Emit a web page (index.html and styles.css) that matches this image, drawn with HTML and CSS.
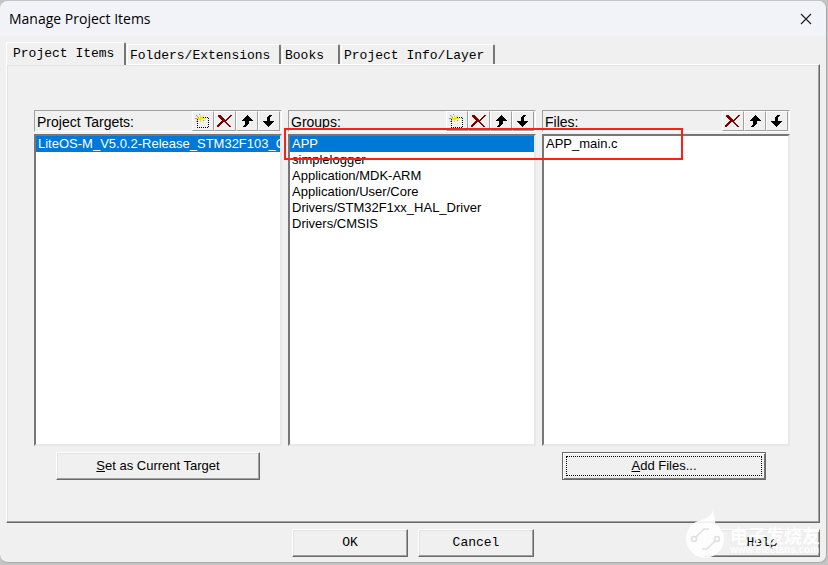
FILE: index.html
```html
<!DOCTYPE html>
<html lang="en">
<head>
<meta charset="utf-8">
<title>Manage Project Items</title>
<link rel="stylesheet" href="styles.css">
</head>
<body>
<svg class="defs" aria-hidden="true">
  <symbol id="new" viewBox="0 0 16 16" shape-rendering="crispEdges">
    <path d="M2.500 6V14.500H13.500V4.500H8" fill="none" stroke="#000" stroke-dasharray="1 1"/>
    <path d="M5 2h1v2h-1zM8 2h1v1h-1zM7 3h1v1h-1zM5 4h3v1h2v1h-3v1h-1v2h-1v-2h-1v-1h-2v-1h3z" fill="#f0e800"/>
    <path d="M1 2h1v1h-1zM2 3h1v1h-1zM3 4h1v1h-1zM0 5h2v1h-2zM2 7h1v1h-1zM1 8h1v1h-1zM8 7h1v1h-1zM4 1h1v1h-1z" fill="#929292"/>
  </symbol>
  <symbol id="delete" viewBox="0 0 16 16" shape-rendering="crispEdges">
    <path d="M1 2h3v1h1v1h1v1h1v1h1v1h1v-1h1v-1h1v-1h1v-1h1v-1h2v1h-1v1h-1v1h-1v1h-1v1h-1v1h-1v1h1v1h1v1h1v1h1v1h1v1h-2v-1h-1v-1h-1v-1h-1v-1h-1v-1h-2v1h-1v1h-1v1h-1v1h-1v1h-2v-2h1v-1h1v-1h1v-1h1v-1h1v-1h-1v-1h-1v-1h-1v-1h-1v-1h-1z" fill="#800000"/>
  </symbol>
  <symbol id="up" viewBox="0 0 16 16" shape-rendering="crispEdges">
    <path d="M8 2h1v1h1v1h1v1h1v1h1v1h1v1h-4v3h-1v1h-1v1h-1v1h-3v-1h1v-1h1v-4h-3v-1h1v-1h1v-1h1v-1h1v-1h1z" fill="#000"/>
  </symbol>
  <symbol id="down" viewBox="0 0 16 16" shape-rendering="crispEdges">
    <path d="M8 2h3v1h-1v1h-1v4h4v1h-1v1h-1v1h-1v1h-1v1h-1v1h-1v-1h-1v-1h-1v-1h-1v-1h-1v-1h-1v-1h4v-4h1v-1h1z" fill="#000"/>
  </symbol>
</svg>
<main class="dialog">
  <header class="titlebar">
    <h1>Manage Project Items</h1>
    <button class="close" aria-label="Close"><svg viewBox="0 0 12 12"><path d="M1 1l10 10M11 1L1 11" fill="none" stroke="#222" stroke-width="1.200"/></svg></button>
  </header>
  <div class="content">
    <nav class="tabs" role="tablist">
      <button class="tab active" role="tab" aria-selected="true">Project Items</button>
      <button class="tab" role="tab">Folders/Extensions</button>
      <button class="tab books" role="tab">Books</button>
      <button class="tab" role="tab">Project Info/Layer</button>
    </nav>
    <section class="panel">
      <div class="columns">
        <div class="column">
          <div class="bar">
            <label for="targets">Project Targets:</label>
            <button class="tool" aria-label="New target"><svg><use href="#new"/></svg></button>
            <button class="tool" aria-label="Delete target"><svg><use href="#delete"/></svg></button>
            <button class="tool" aria-label="Move target up"><svg><use href="#up"/></svg></button>
            <button class="tool" aria-label="Move target down"><svg><use href="#down"/></svg></button>
          </div>
          <select id="targets" size="19"><option selected>LiteOS-M_V5.0.2-Release_STM32F103_C8</option></select>
          <button class="button"><u>S</u>et as Current Target</button>
        </div>
        <div class="column">
          <div class="bar">
            <label for="groups">Groups:</label>
            <button class="tool" aria-label="New group"><svg><use href="#new"/></svg></button>
            <button class="tool" aria-label="Delete group"><svg><use href="#delete"/></svg></button>
            <button class="tool" aria-label="Move group up"><svg><use href="#up"/></svg></button>
            <button class="tool" aria-label="Move group down"><svg><use href="#down"/></svg></button>
          </div>
          <select id="groups" size="19">
            <option selected>APP</option>
            <option>simplelogger</option>
            <option>Application/MDK-ARM</option>
            <option>Application/User/Core</option>
            <option>Drivers/STM32F1xx_HAL_Driver</option>
            <option>Drivers/CMSIS</option>
          </select>
          <div class="marker"></div>
        </div>
        <div class="column">
          <div class="bar">
            <label for="files">Files:</label>
            <button class="tool" aria-label="Delete file"><svg><use href="#delete"/></svg></button>
            <button class="tool" aria-label="Move file up"><svg><use href="#up"/></svg></button>
            <button class="tool" aria-label="Move file down"><svg><use href="#down"/></svg></button>
          </div>
          <select id="files" size="19"><option>APP_main.c</option></select>
          <button class="button default"><u>A</u>dd Files...</button>
        </div>
      </div>
    </section>
    <footer class="footer">
      <button class="button ok">OK</button>
      <button class="button cancel">Cancel</button>
      <button class="button help">Help</button>
    </footer>
  </div>
  <div class="watermark">
    <svg viewBox="0 0 40 50"><path d="M28 1C29 8 31 10 30 15C36 18 39 24 39 30A19 19 0 1 1 13 12C20 10 26 8 28 1Z" fill="#fff"/><g fill="none" stroke="#dedede" stroke-width="1.500"><circle cx="9" cy="30" r="2.500"/><circle cx="32" cy="30" r="2.500"/><path d="M11 28L19 20H24M30 32L22 40H17"/></g></svg>
    <div class="brand"><span lang="zh">电子发烧友</span><small>www.elecfans.com</small></div>
  </div>
</main>
</body>
</html>
```
FILE: styles.css
```css
* { box-sizing: border-box; }
body {
  margin: 0;
  height: 100vh;
  padding: 1px 1px 2px 0;
  background: #c4c4c4;
  color: #000;
  font: 14px/16px "Liberation Sans", Arial, sans-serif;
}
button, select { font: inherit; color: inherit; border-radius: 0; }
button { padding: 0; background: #f0f0f0; }
.defs { position: absolute; width: 0; height: 0; }
.dialog {
  position: relative;
  height: 100%;
  display: flex;
  flex-direction: column;
  background: #f0f0f0;
  border: 1px solid #aaa;
  border-left: 0;
  border-top: 0;
  border-radius: 8px;
  overflow: hidden;
}
.titlebar {
  display: flex;
  align-items: center;
  justify-content: space-between;
  height: 36px;
  padding: 0 14px 0 9px;
  background: #f2f2f9;
}
h1 { margin: 0; font: 14px/20px "Open Sans", "Noto Sans", sans-serif; }
.close { width: 12px; height: 12px; border: 0; background: none; }
.close svg { display: block; width: 12px; height: 12px; }
.content {
  flex: 1;
  display: flex;
  flex-direction: column;
  padding: 6px 6px 5px;
}
.tabs {
  display: flex;
  align-items: flex-end;
  position: relative;
  margin-bottom: -1px;
}
.tab, .footer .button { font: 13px/16px "Liberation Mono", "Courier New", monospace; }
.tab {
  height: 20px;
  padding: 3px 4px 0 2px;
  margin: 0 0 1px 1px;
  border: 1px solid #fff;
  border-right: 2px solid #777;
  border-bottom: 0;
  border-radius: 2px 2px 0 0;
  flex: 0 0 154px;
  text-align: left;
}
.tab.active { flex-basis: 120px; height: 23px; margin: 0; padding: 0 6px 0; }
.tab.books { flex-basis: 58px; }
.panel {
  flex: 1;
  display: flex;
  padding: 45px 29px 42px 27px;
  border: 1px solid;
  border-color: #fff #696969 #696969 #fff;
  box-shadow: inset -1px -1px #a0a0a0, inset 1px 1px #e3e3e3;
}
.columns {
  flex: 1;
  display: grid;
  grid-template-columns: repeat(3, minmax(0, 1fr));
  gap: 6px;
}
.column { position: relative; display: flex; flex-direction: column; }
.bar {
  display: flex;
  height: 22px;
  padding-right: 1px;
  border: 1px solid;
  border-color: #a0a0a0 #fff #fff #a0a0a0;
}
.bar label { flex: 1; padding: 3px 0 0 2px; }
.tool {
  width: 22px;
  height: 20px;
  border: 1px solid;
  border-color: #fff #a0a0a0 #a0a0a0 #fff;
}
.tool svg { display: block; width: 16px; height: 16px; margin: auto; }
select {
  width: 100%;
  height: 312px;
  margin-top: 2px;
  padding: 0;
  border: 2px solid;
  border-color: #777 #e8e8e8 #e8e8e8 #777;
  background: #fff;
  outline: 0;
  overflow: hidden;
  scrollbar-width: none;
  font-size: 13px;
}
option { min-height: 16px; padding: 0 2px; line-height: 16px; color: #000; }
option:checked { background: #0078d7 linear-gradient(#0078d7, #0078d7); color: #fff !important; }
.button {
  height: 28px;
  border: 1px solid;
  border-color: #fff #696969 #696969 #fff;
  box-shadow: inset -1px -1px #a0a0a0, inset 1px 1px #e3e3e3;
}
.column .button { width: 204px; margin: 6px 0 0 22px; font-size: 13px; }
.column .button.default {
  margin-left: 20px;
  border: 1px solid #696969;
  box-shadow: inset 1px 1px #fff, inset -1px -1px #777;
  outline: 1px dotted #000;
  outline-offset: -5px;
}
.marker {
  position: absolute;
  top: 18px;
  left: -4px;
  width: 161%;
  height: 32px;
  border: 2px solid #fb2116;
  pointer-events: none;
  z-index: 1;
}
.footer {
  display: grid;
  grid-template-columns: 1fr 116px 116px 1fr;
  gap: 10px;
  margin-top: 6px;
}
.footer .button { grid-row: 1; }
.footer .ok { grid-column: 2; }
.footer .cancel { grid-column: 3; }
.footer .help { grid-column: 4; width: 116px; justify-self: end; }
.watermark {
  position: absolute;
  right: 6px;
  bottom: 3px;
  display: flex;
  align-items: flex-end;
  gap: 5px;
  color: #fff;
  opacity: .9;
  pointer-events: none;
}
.watermark svg { width: 40px; height: 50px; }
.brand { padding-bottom: 4px; width: 90px; }
.brand span { display: block; font: bold 18px/20px "Noto Sans CJK SC", sans-serif; }
.brand small { display: block; font: bold 10px/10px "Liberation Sans", sans-serif; }
```
